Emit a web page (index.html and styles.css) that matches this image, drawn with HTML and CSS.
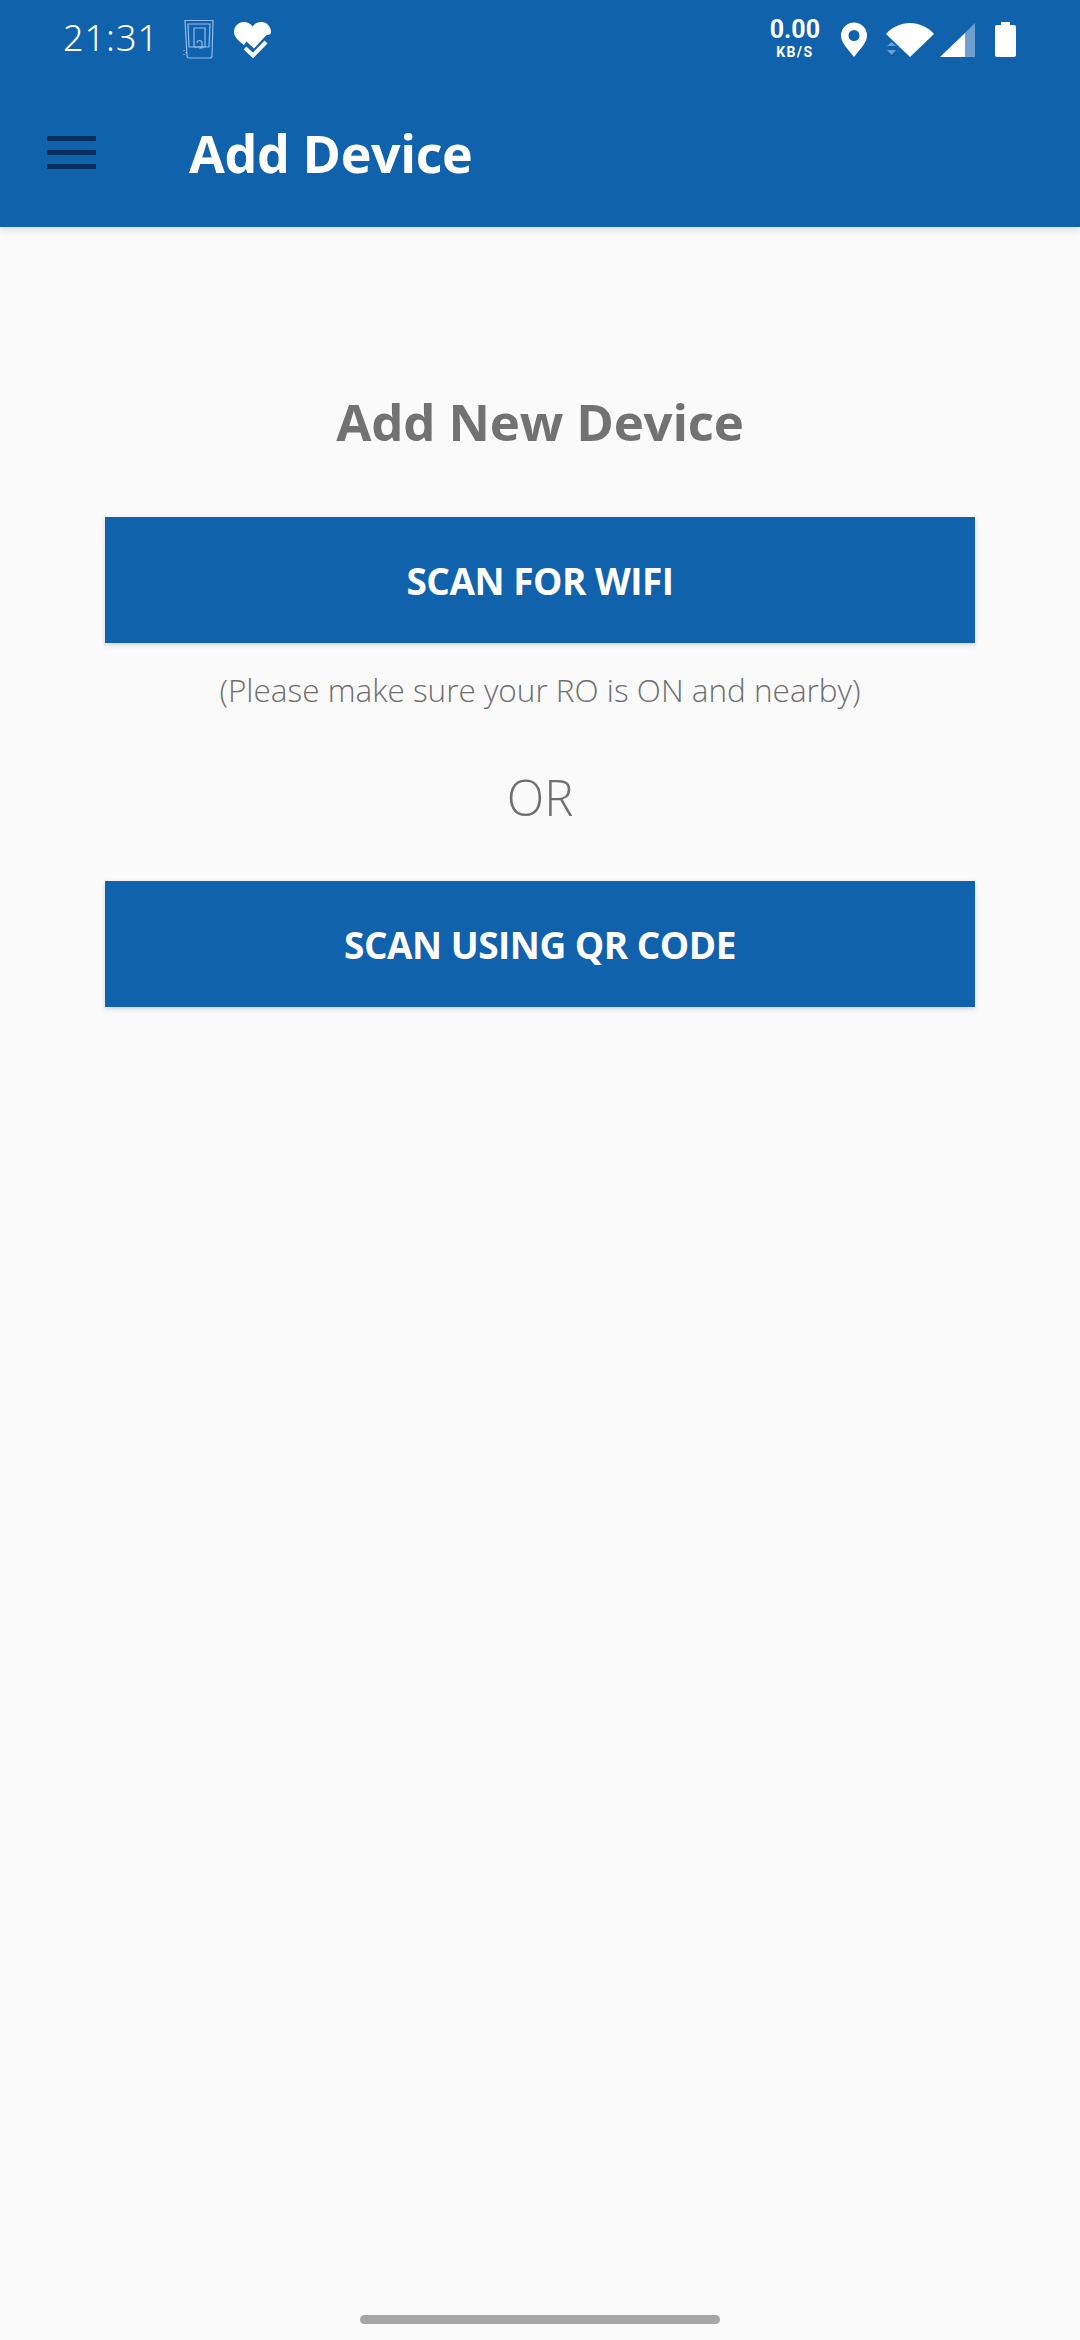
FILE: index.html
```html
<!DOCTYPE html>
<html lang="en">
<head>
<meta charset="utf-8">
<title>Add Device</title>
<link rel="stylesheet" href="styles.css">
</head>
<body>
<div class="screen">
  <header class="appbar">
    <div class="status">
      <span class="time">21:31</span>
      <svg class="ic-sim" width="32" height="40" viewBox="0 0 32 40" fill="none" stroke="#8fbcec" stroke-width="1.2">
        <path d="M2 1.500H30L29 37a2 2 0 0 1-2 2H6a2 2 0 0 1-2-2Z"/>
        <path d="M5 5H27L26 28H6Z"/>
        <path d="M11 9H22V28H11Z"/>
        <path d="M14 24a2.500 2.500 0 0 1 5 0v5h-3"/>
        <path d="M1 31v1M1 35v1M3 33v1"/>
      </svg>
      <svg class="ic-heart" width="40" height="38" viewBox="0 0 40 38">
        <path fill="#fff" d="M11 1C5 1 1 5.500 1 11c0 4 3 7 6 10l4 3 2.500-3.500 7.500 7 12.500-13.500C37.500 14 38 12.500 38 11 38 5.500 34 1 28 1c-3.500 0-6.500 1.500-8.500 4.500C17.500 2.500 14.500 1 11 1Z"/>
        <path fill="none" stroke="#fff" stroke-width="4" d="M12 27l8 7.500L33 21"/>
      </svg>
      <span class="spacer"></span>
      <span class="speed"><b>0.00</b><i>KB/S</i></span>
      <svg class="ic-pin" width="28" height="36" viewBox="0 0 28 36">
        <path fill="#fff" fill-rule="evenodd" d="M14 35C6 25 1 20 1 13.500a13 13 0 0 1 26 0C27 20 22 25 14 35ZM14 8a5.500 5.500 0 1 0 0 11 5.500 5.500 0 0 0 0-11Z"/>
      </svg>
      <svg class="ic-wifi" width="48" height="36" viewBox="0 0 48 36">
        <path fill="#fff" d="M0 12C6 5 15 1 24 1s18 4 24 11L24 35Z"/>
        <path fill="#6f9fd3" d="M1 24l4.500-4 4.500 4ZM1 28h9l-4.500 5Z"/>
      </svg>
      <svg class="ic-signal" width="36" height="36" viewBox="0 0 36 36">
        <path fill="#fff" d="M0 35 25 11V35Z"/>
        <path fill="#6f9fd3" d="M25 11 35 1V35H25Z"/>
      </svg>
      <svg class="ic-batt" width="21" height="36" viewBox="0 0 21 36">
        <path fill="#fff" d="M6 1h9v3h4a2 2 0 0 1 2 2v28a2 2 0 0 1-2 2H2a2 2 0 0 1-2-2V6a2 2 0 0 1 2-2h4Z"/>
      </svg>
    </div>
    <div class="toolbar">
      <div class="menu"><span></span><span></span><span></span></div>
      <h1 class="title">Add Device</h1>
    </div>
  </header>
  <main class="content">
    <h2 class="heading">Add New Device</h2>
    <button class="btn">SCAN FOR WIFI</button>
    <p class="note">(Please make sure your RO is ON and nearby)</p>
    <p class="or">OR</p>
    <button class="btn">SCAN USING QR CODE</button>
  </main>
  <div class="home-wrap"><div class="home"></div></div>
</div>
</body>
</html>
```
FILE: styles.css
```css
* { box-sizing: border-box; }
html, body { margin: 0; padding: 0; }
body { width: 1080px; height: 2340px; background: #fafafa; font-family: "Open Sans", "Noto Sans", sans-serif; overflow: hidden; }
.screen { width: 1080px; height: 2340px; display: flex; flex-direction: column; }
.appbar { height: 227px; background: #1062ac; color: #fff; box-shadow: 0 3px 7px rgba(0,0,0,.12); flex: none; }
.status { height: 76px; display: flex; align-items: center; padding: 0 64px 0 63px; }
.time { font-family: "Noto Sans", sans-serif; font-weight: 300; font-size: 36px; letter-spacing: 1px; line-height: 1; }
.ic-sim { margin-left: 24px; margin-top: 2px; }
.ic-heart { margin-left: 18px; margin-top: 4px; }
.spacer { flex: 1; }
.speed { display: flex; flex-direction: column; align-items: center; font-family: Roboto, sans-serif; margin-top: 3px; }
.speed b { font-size: 25px; font-weight: 700; line-height: 25px; }
.speed i { font-style: normal; font-weight: 700; font-size: 14px; letter-spacing: 1.400px; line-height: 20px; }
.ic-pin { margin-left: 20px; margin-top: 4px; }
.ic-wifi { margin-left: 18px; margin-top: 4px; }
.ic-signal { margin-left: 6px; margin-top: 4px; }
.ic-batt { margin-left: 19px; margin-top: 2px; }
.toolbar { height: 151px; display: flex; align-items: center; padding: 0 0 0 47px; }
.menu { width: 49px; display: flex; flex-direction: column; gap: 9px; margin-top: 1px; }
.menu span { display: block; height: 5px; background: #0a2f5e; border-radius: 1px; }
.title { margin: 2px 0 0 93px; font-size: 52px; font-weight: 700; line-height: 1; letter-spacing: -.4px; }
.content { flex: 1; display: flex; flex-direction: column; align-items: center; padding: 0 105px; }
.heading { margin: 165px 0 0; height: 125px; font-size: 51px; font-weight: 700; color: #727272; line-height: 58px; letter-spacing: -.2px; }
.btn { width: 870px; height: 126px; flex: none; background: #1062ac; color: #fff; border: 0; font-family: inherit; font-size: 37px; font-weight: 700; letter-spacing: -.5px; box-shadow: 0 2px 5px rgba(0,0,0,.16); }
.note { margin: 27px 0 0; font-size: 31.500px; font-weight: 300; color: #6f6f6f; line-height: 40px; height: 40px; }
.or { margin: 59px 0 56px; font-size: 49px; font-weight: 300; color: #6f6f6f; line-height: 56px; height: 56px; }
.home-wrap { height: 25px; flex: none; }
.home { width: 360px; height: 9px; background: #a6a6a6; border-radius: 5px; margin: 0 auto; }
```
